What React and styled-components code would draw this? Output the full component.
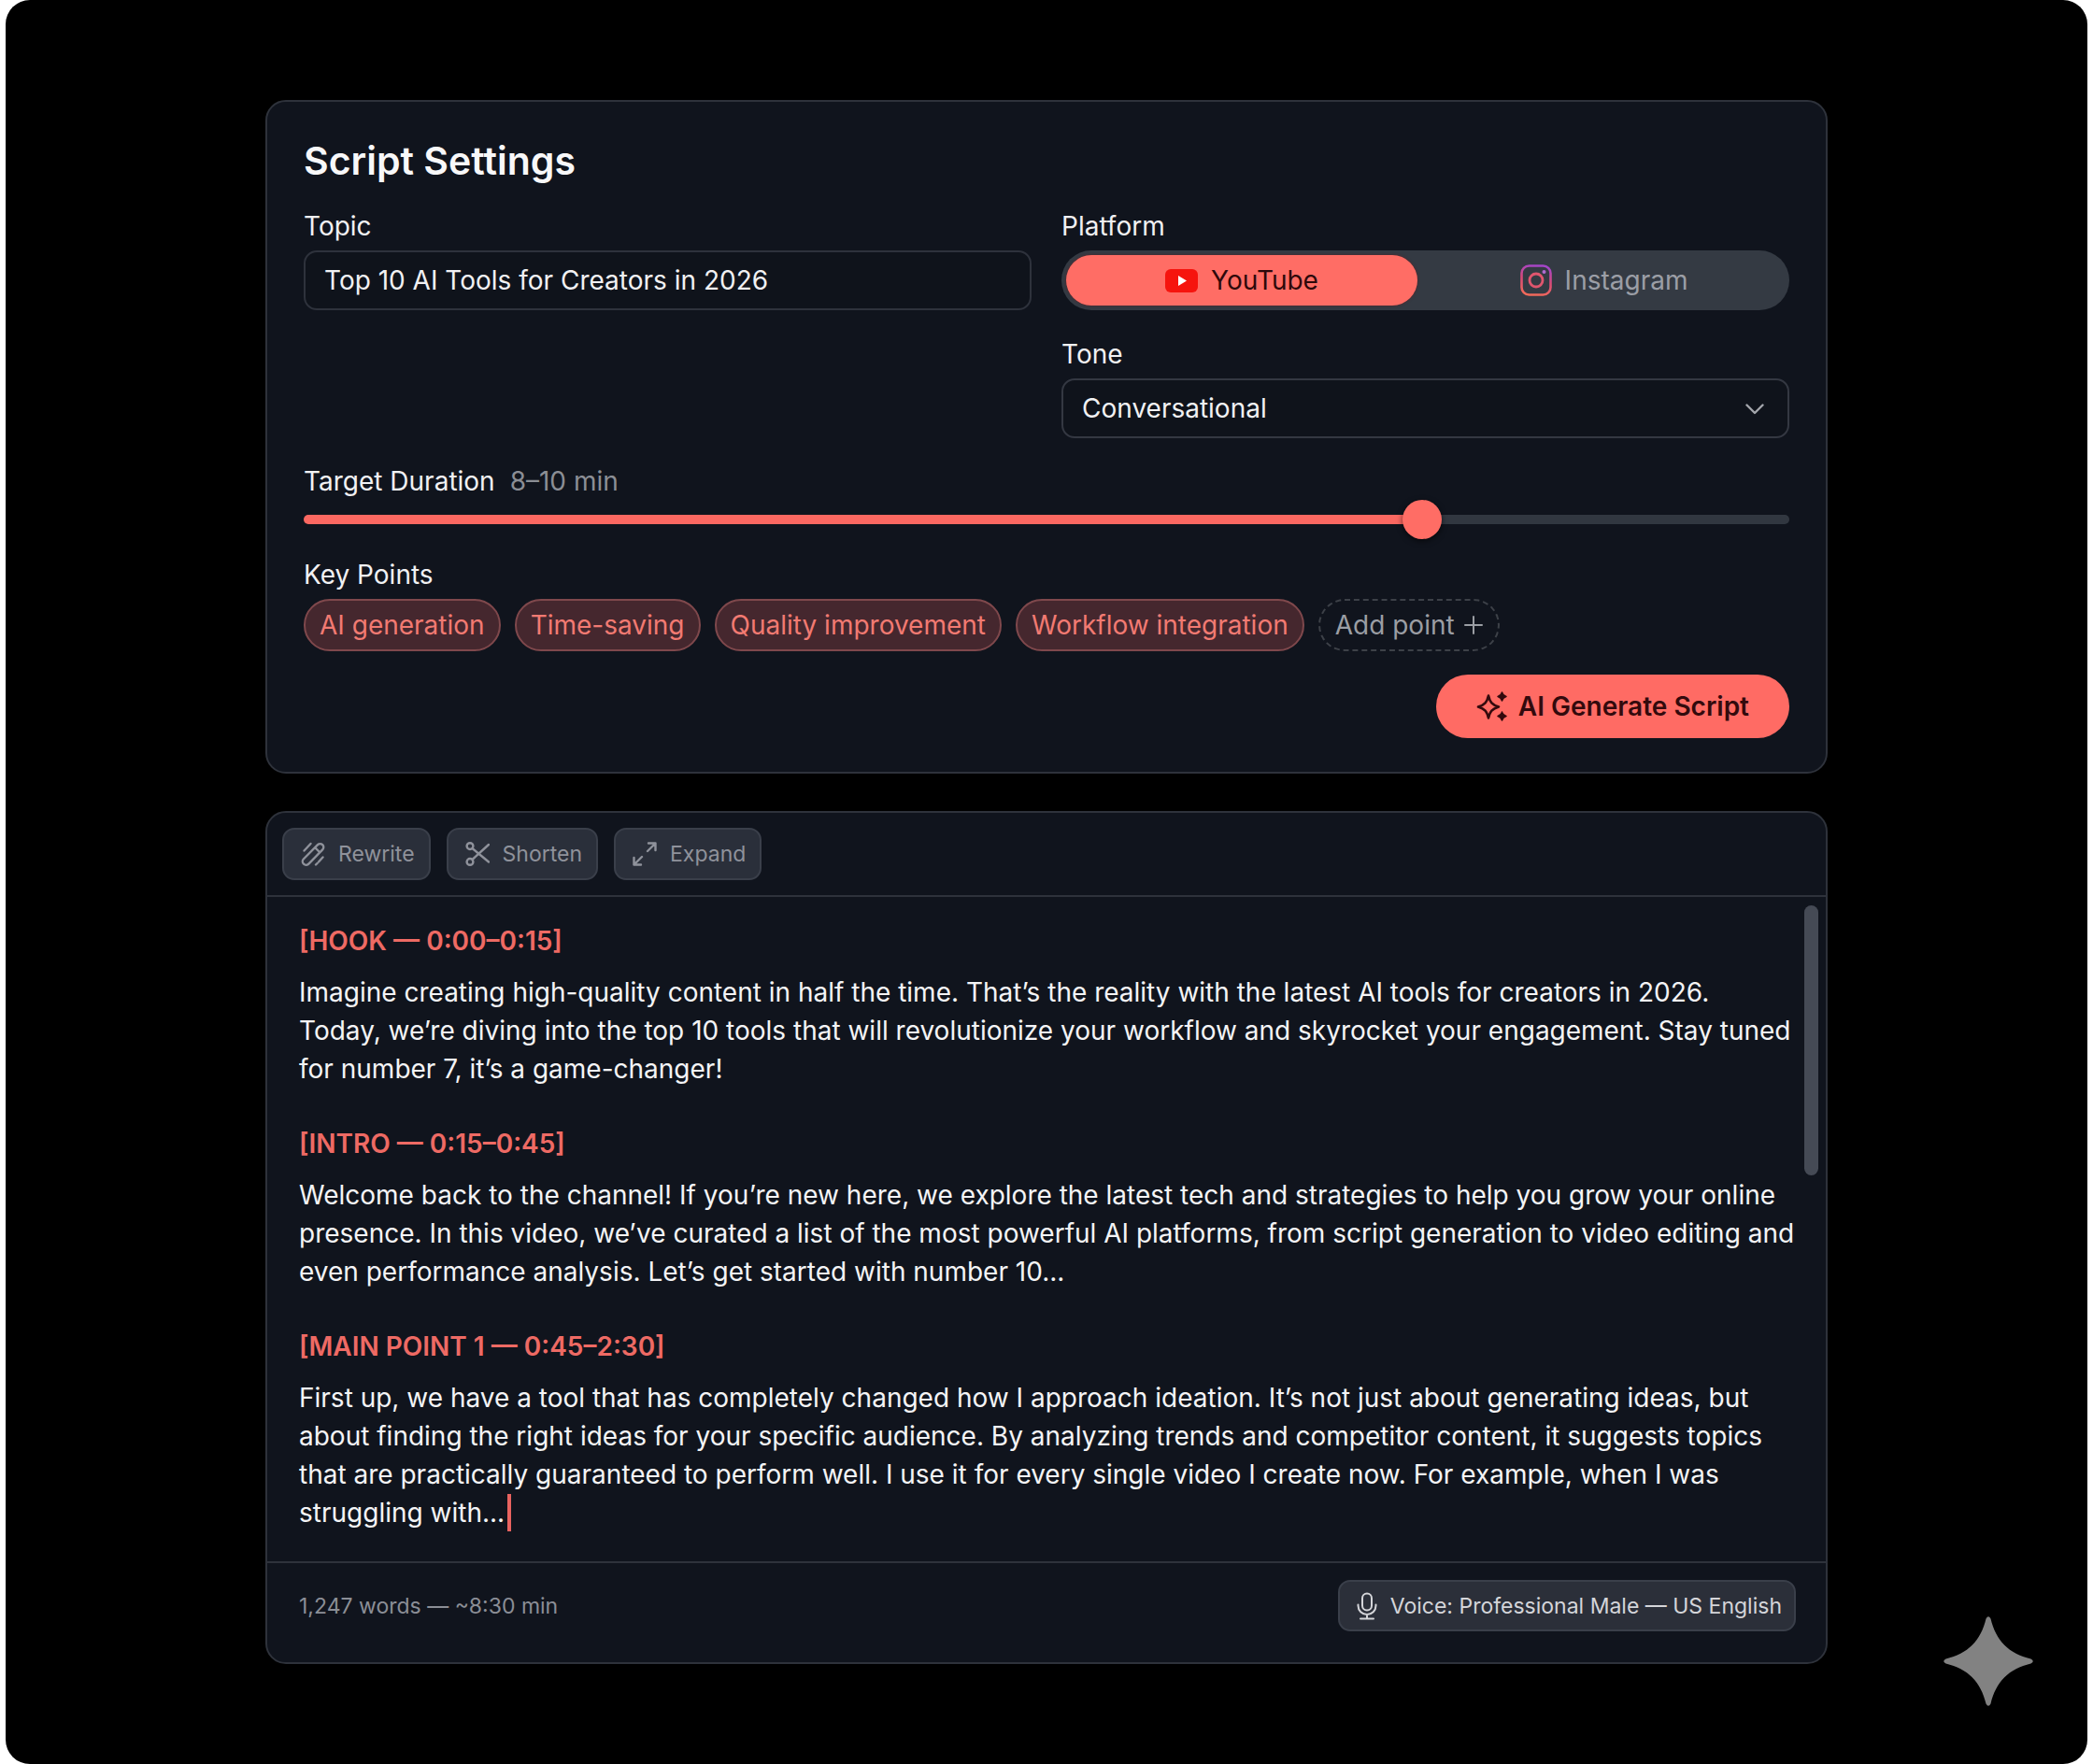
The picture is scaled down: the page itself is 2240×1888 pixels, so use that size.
import React, { Component } from "react";
import styled, { createGlobalStyle } from "styled-components";

const GlobalStyle = createGlobalStyle`
  * {
    box-sizing: border-box;
  }
  body {
    margin: 0;
    background: #fff;
  }
  body, button, input, select {
    font-family: Inter, "Liberation Sans", sans-serif;
  }
`;

const Page = styled.div`
  padding: 0 6px 2px;
`;

const Frame = styled.main`
  position: relative;
  min-height: calc(100vh - 2px);
  padding: 107px 40px;
  background: #000;
  border-radius: 26px;
`;

const Stack = styled.div`
  display: flex;
  flex-direction: column;
  gap: 40px;
  max-width: 1672px;
  margin: 0 auto;
`;

const Card = styled.section`
  background: #10141d;
  border: 2px solid #2e323b;
  border-radius: 22px;
`;

const SettingsCard = styled(Card)`
  padding: 38px 39px 36px;
`;

const Title = styled.h1`
  margin: 0 0 27px;
  color: #f8f8f9;
  font-size: 41px;
  font-weight: 600;
  line-height: 50px;
`;

const Fields = styled.div`
  display: grid;
  grid-template-columns: 1fr 1fr;
  gap: 29px 32px;
  margin-bottom: 28px;
`;

const Field = styled.div`
  grid-column: ${props => props.$column};
`;

const Label = styled.label`
  display: block;
  margin-bottom: 8px;
  color: #f1f1f3;
  font-size: 28px;
  line-height: 36px;
`;

const GroupLabel = styled(Label).attrs({ as: "div" })``;

const TextInput = styled.input`
  display: block;
  width: 100%;
  height: 64px;
  padding: 0 20px;
  color: #f1f1f3;
  background: #0f131b;
  border: 2px solid #2e323c;
  border-radius: 14px;
  font-size: 28px;
`;

const SelectWrap = styled.div`
  position: relative;
`;

const Select = styled(TextInput).attrs({ as: "select" })`
  appearance: none;
  border-color: #343842;
`;

const Chevron = styled.svg`
  position: absolute;
  top: 27px;
  right: 27px;
  pointer-events: none;
`;

const Toggle = styled.div`
  display: flex;
  height: 64px;
  padding: 5px;
  background: #343a43;
  border-radius: 32px;
`;

const ToggleButton = styled.button`
  display: flex;
  flex: ${props => (props.$active ? 379 : 390)};
  align-items: center;
  justify-content: center;
  gap: 14px;
  padding: ${props => (props.$active ? "0" : "0 0 0 6px")};
  color: ${props => (props.$active ? "#2e090b" : "#9b9ea6")};
  background: ${props => (props.$active ? "#ff6d65" : "transparent")};
  border: 0;
  border-radius: 27px;
  box-shadow: ${props => (props.$active ? "0 0 3px #5a2428" : "none")};
  font-size: 28px;
`;

const DurationLabel = styled(Label)`
  margin-bottom: 2px;
`;

const Muted = styled.span`
  margin-left: 16px;
  color: #8b8e95;
`;

const Slider = styled.input`
  display: block;
  width: 100%;
  height: 42px;
  margin: 0 0 20px;
  appearance: none;
  background: transparent;

  &::-webkit-slider-runnable-track {
    height: 10px;
    border-radius: 5px;
    background: linear-gradient(
      to right,
      #fb6861 var(--fill),
      #313740 var(--fill)
    );
  }

  &::-webkit-slider-thumb {
    appearance: none;
    width: 42px;
    height: 42px;
    margin-top: -16px;
    border-radius: 50%;
    background: #ff6d65;
    box-shadow: 0 2px 6px rgba(0, 0, 0, 0.6);
  }
`;

const Chips = styled.div`
  display: flex;
  flex-wrap: wrap;
  gap: 15px;
  margin-bottom: 25px;
`;

const Chip = styled.span`
  height: 56px;
  padding: 0 15px;
  color: #f27a72;
  background: #45272e;
  border: 2px solid #7f484c;
  border-radius: 28px;
  font-size: 28px;
  line-height: 52px;
`;

const AddChip = styled.button`
  display: flex;
  align-items: center;
  gap: 10px;
  height: 56px;
  padding: 0 16px;
  color: #9b9ea4;
  background: transparent;
  border: 2px dashed #3d4148;
  border-radius: 28px;
  font-size: 28px;
`;

const Actions = styled.div`
  display: flex;
  justify-content: flex-end;
`;

const GenerateButton = styled.button`
  display: flex;
  align-items: center;
  gap: 12px;
  height: 68px;
  padding: 0 43px;
  color: #330a0d;
  background: #ff6b64;
  border: 0;
  border-radius: 34px;
  font-size: 28px;
  font-weight: 600;
`;

const Toolbar = styled.div`
  display: flex;
  gap: 17px;
  padding: 16px;
  border-bottom: 2px solid #2e323b;
`;

const ToolButton = styled.button`
  display: flex;
  align-items: center;
  gap: 14px;
  height: 56px;
  padding: 0 15px 0 18px;
  color: #8f929b;
  background: #2a2f3a;
  border: 2px solid #3a3f4a;
  border-radius: 13px;
  font-size: 23px;
`;

const ScriptBody = styled.div`
  display: flex;
  gap: 7px;
  padding: 0 8px 0 34px;
`;

const ScriptText = styled.div`
  flex: 1;
  padding: 27px 0 31px;
`;

const Heading = styled.h2`
  margin: 0 0 15px;
  color: #ee6a64;
  font-size: 28px;
  font-weight: 600;
  line-height: 40px;
`;

const Paragraph = styled.p`
  margin: 0 0 39px;
  color: #f4f4f6;
  font-size: 28px;
  line-height: 41px;
  white-space: pre-line;

  &:last-child {
    margin-bottom: 0;
  }
`;

const Caret = styled.span`
  display: inline-block;
  width: 4px;
  height: 40px;
  margin-left: 3px;
  vertical-align: top;
  background: #e8635f;
`;

const ScrollThumb = styled.div`
  width: 15px;
  height: 289px;
  margin-top: 9px;
  background: #454a55;
  border-radius: 8px;
`;

const Footer = styled.footer`
  display: flex;
  align-items: center;
  justify-content: space-between;
  padding: 18px 32px 33px 34px;
  color: #8b8e96;
  border-top: 2px solid #2e323b;
  font-size: 23px;
`;

const VoiceButton = styled(ToolButton)`
  padding: 0 13px 0 18px;
  height: 55px;
  color: #d4d5d9;
  background: #2b2f39;
`;

const CornerStar = styled.svg`
  position: absolute;
  right: 58px;
  bottom: 62px;
`;

const YouTubeIcon = () => (
  <svg width="35" height="25" viewBox="0 0 35 25">
    <rect width="35" height="25" rx="6" fill="#f6140e" />
    <path d="M14 7l9 5.5-9 5.5z" fill="#fff" />
  </svg>
);

const InstagramIcon = () => (
  <svg width="34" height="34" viewBox="0 0 34 34" fill="none">
    <defs>
      <linearGradient id="insta" x1="0.6" y1="0" x2="0.4" y2="1">
        <stop offset="0" stopColor="#a445c8" />
        <stop offset="0.5" stopColor="#d84a78" />
        <stop offset="1" stopColor="#f0695a" />
      </linearGradient>
    </defs>
    <rect x="1.5" y="1.5" width="31" height="31" rx="8" stroke="url(#insta)" strokeWidth="2.6" />
    <circle cx="17" cy="17" r="7" stroke="#e0566e" strokeWidth="2.8" />
    <circle cx="25.5" cy="8" r="2" fill="#b26bd0" />
  </svg>
);

const SparklesIcon = () => (
  <svg width="33" height="32" viewBox="0 0 33 32">
    <path
      d="M13 4.5C14.5 11.5 17 14.5 24 16.5C17 18.5 14.5 21.5 13 28.5C11.5 21.5 9 18.5 2 16.5C9 14.5 11.5 11.5 13 4.5Z"
      fill="none"
      stroke="currentColor"
      strokeWidth="2.6"
      strokeLinejoin="round"
    />
    {[5.5, 26.5].map(y => (
      <path
        key={y}
        transform={`translate(27.5 ${y})`}
        d="M0-4.5Q.9-.9 4.5 0Q.9.9 0 4.5Q-.9.9-4.5 0Q-.9-.9 0-4.5Z"
        fill="currentColor"
        stroke="currentColor"
        strokeWidth="1.5"
        strokeLinejoin="round"
      />
    ))}
  </svg>
);

const LineIcon = ({ children, width = 26, height = 26, stroke = 2 }) => (
  <svg
    width={width}
    height={height}
    viewBox={`0 0 ${width} ${height}`}
    fill="none"
    stroke="currentColor"
    strokeWidth={stroke}
    strokeLinecap="round"
    strokeLinejoin="round"
  >
    {children}
  </svg>
);

const tools = [
  {
    name: "Rewrite",
    icon: (
      <>
        <path d="M3.5 9.5L10.5 2" />
        <path d="M2.8 18.5L18 3.2a3.6 3.6 0 0 1 5.2 5.2L8.6 23.4a4 4 0 0 1-5.6.3 3.7 3.7 0 0 1-.2-5.2z" />
        <path d="M15.5 6.5l4.500 4.500" />
        <path d="M16 24.5L17.5 23M19 21.5L23.5 16.5" />
      </>
    )
  },
  {
    name: "Shorten",
    icon: (
      <>
        <circle cx="5" cy="4.6" r="3.4" />
        <circle cx="5" cy="21.4" r="3.4" />
        <path d="M7.5 7L25 21.5M7.5 19L25 3" />
      </>
    )
  },
  {
    name: "Expand",
    icon: (
      <>
        <path d="M16 10L24.5 1.5M17 1.5h7.5v7.5" />
        <path d="M10 16L1.5 24.5M1.5 17v7.5h7.5" />
      </>
    )
  }
];

const script = [
  {
    heading: "[HOOK — 0:00–0:15]",
    text:
      "Imagine creating high-quality content in half the time. That’s the reality with the latest AI tools for creators in 2026.\nToday, we’re diving into the top 10 tools that will revolutionize your workflow and skyrocket your engagement. Stay tuned for number 7, it’s a game-changer!"
  },
  {
    heading: "[INTRO — 0:15–0:45]",
    text:
      "Welcome back to the channel! If you’re new here, we explore the latest tech and strategies to help you grow your online presence. In this video, we’ve curated a list of the most powerful AI platforms, from script generation to video editing and even performance analysis. Let’s get started with number 10..."
  },
  {
    heading: "[MAIN POINT 1 — 0:45–2:30]",
    text:
      "First up, we have a tool that has completely changed how I approach ideation. It’s not just about generating ideas, but about finding the right ideas for your specific audience. By analyzing trends and competitor content, it suggests topics that are practically guaranteed to perform well. I use it for every single video I create now. For example, when I was struggling with..."
  }
];

class App extends Component {
  state = {
    topic: "Top 10 AI Tools for Creators in 2026",
    platform: "YouTube",
    tone: "Conversational",
    duration: 76,
    points: [
      "AI generation",
      "Time-saving",
      "Quality improvement",
      "Workflow integration"
    ]
  };

  handleChange = e => {
    this.setState({ [e.target.name]: e.target.value });
  };

  render() {
    const { topic, platform, tone, duration, points } = this.state;
    return (
      <Page>
        <GlobalStyle />
        <Frame>
          <Stack>
            <SettingsCard>
              <Title>Script Settings</Title>
              <Fields>
                <Field $column="1">
                  <Label htmlFor="topic">Topic</Label>
                  <TextInput
                    id="topic"
                    name="topic"
                    type="text"
                    value={topic}
                    onChange={this.handleChange}
                  />
                </Field>
                <Field $column="2">
                  <GroupLabel id="platform">Platform</GroupLabel>
                  <Toggle role="group" aria-labelledby="platform">
                    {["YouTube", "Instagram"].map(name => (
                      <ToggleButton
                        key={name}
                        type="button"
                        $active={platform === name}
                        aria-pressed={platform === name}
                        onClick={() => this.setState({ platform: name })}
                      >
                        {name === "YouTube" ? <YouTubeIcon /> : <InstagramIcon />}
                        {name}
                      </ToggleButton>
                    ))}
                  </Toggle>
                </Field>
                <Field $column="2">
                  <Label htmlFor="tone">Tone</Label>
                  <SelectWrap>
                    <Select
                      id="tone"
                      name="tone"
                      value={tone}
                      onChange={this.handleChange}
                    >
                      <option>Conversational</option>
                    </Select>
                    <Chevron width="20" height="12" viewBox="0 0 20 12">
                      <path
                        d="M1.5 1.5L10 10L18.5 1.5"
                        fill="none"
                        stroke="#a3a6ac"
                        strokeWidth="2.4"
                        strokeLinecap="round"
                        strokeLinejoin="round"
                      />
                    </Chevron>
                  </SelectWrap>
                </Field>
              </Fields>

              <DurationLabel htmlFor="duration">
                Target Duration<Muted>8–10 min</Muted>
              </DurationLabel>
              <Slider
                id="duration"
                name="duration"
                type="range"
                min="0"
                max="100"
                value={duration}
                onChange={this.handleChange}
                style={{ "--fill": `${duration}%` }}
              />

              <GroupLabel>Key Points</GroupLabel>
              <Chips>
                {points.map(point => (
                  <Chip key={point}>{point}</Chip>
                ))}
                <AddChip type="button">
                  Add point
                  <LineIcon width={20} height={20}>
                    <path d="M10 1v18M1 10h18" />
                  </LineIcon>
                </AddChip>
              </Chips>

              <Actions>
                <GenerateButton type="button">
                  <SparklesIcon />
                  AI Generate Script
                </GenerateButton>
              </Actions>
            </SettingsCard>

            <Card>
              <Toolbar>
                {tools.map(tool => (
                  <ToolButton key={tool.name} type="button">
                    <LineIcon stroke={2.4}>{tool.icon}</LineIcon>
                    {tool.name}
                  </ToolButton>
                ))}
              </Toolbar>
              <ScriptBody>
                <ScriptText>
                  {script.map((part, i) => (
                    <React.Fragment key={part.heading}>
                      <Heading>{part.heading}</Heading>
                      <Paragraph>
                        {part.text}
                        {i === script.length - 1 && <Caret />}
                      </Paragraph>
                    </React.Fragment>
                  ))}
                </ScriptText>
                <ScrollThumb />
              </ScriptBody>
              <Footer>
                <span>1,247 words — ~8:30 min</span>
                <VoiceButton type="button">
                  <LineIcon width={22} height={30}>
                    <rect x="6" y="1.5" width="10" height="18" rx="5" />
                    <path d="M1.5 13.5v1a9.5 9.5 0 0 0 19 0v-1M11 24v4.500M4 28.500h14" />
                  </LineIcon>
                  Voice: Professional Male — US English
                </VoiceButton>
              </Footer>
            </Card>
          </Stack>
          <CornerStar width="96" height="96" viewBox="0 0 96 96">
            <path
              d="M45.5 2.5Q48-2 50.5 2.5C56 26 70 40 93.5 45.5Q98 48 93.5 50.5C70 56 56 70 50.5 93.5Q48 98 45.5 93.5C40 70 26 56 2.5 50.5Q-2 48 2.5 45.5C26 40 40 26 45.5 2.5Z"
              fill="#828282"
            />
          </CornerStar>
        </Frame>
      </Page>
    );
  }
}

export default App;
